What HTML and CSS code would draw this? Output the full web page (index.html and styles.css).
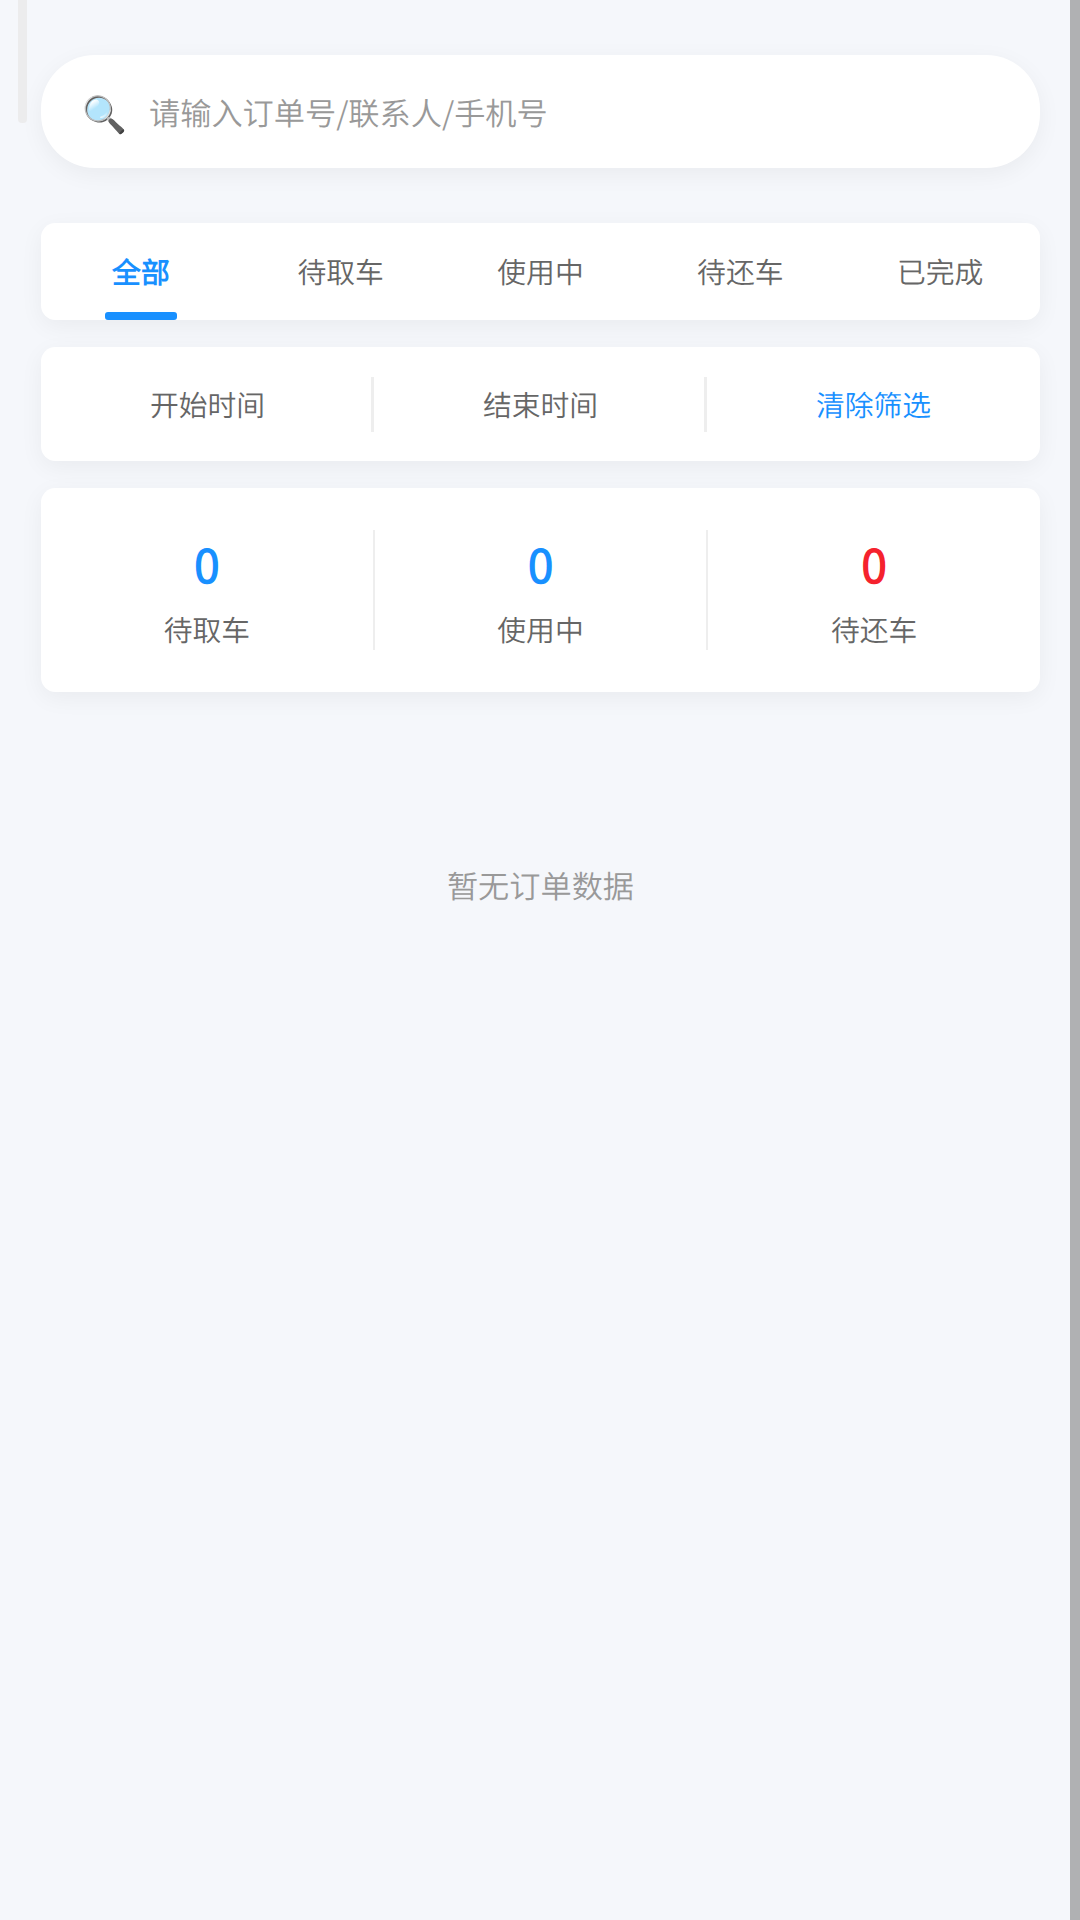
FILE: index.html
```
<!DOCTYPE html>
<html lang="zh-CN">
<head>
    <meta charset="UTF-8">
    <meta name="viewport" content="width=device-width, initial-scale=1.0">
    <title>订单列表</title>
    <link rel="stylesheet" href="styles.css">
</head>
<body>
    <div class="side-handle"></div>
    <div class="scroll-track"></div>

    <div class="container">
        <div class="search-box">
            <span class="search-icon">🔍</span>
            <span class="search-placeholder">请输入订单号/联系人/手机号</span>
        </div>

        <div class="card tabs">
            <div class="tab active">全部</div>
            <div class="tab">待取车</div>
            <div class="tab">使用中</div>
            <div class="tab">待还车</div>
            <div class="tab">已完成</div>
        </div>

        <div class="card filter">
            <div class="filter-item">开始时间</div>
            <div class="filter-item">结束时间</div>
            <div class="filter-item clear">清除筛选</div>
        </div>

        <div class="card stats">
            <div class="stat-item">
                <div class="stat-num">0</div>
                <div class="stat-label">待取车</div>
            </div>
            <div class="stat-item">
                <div class="stat-num">0</div>
                <div class="stat-label">使用中</div>
            </div>
            <div class="stat-item">
                <div class="stat-num red">0</div>
                <div class="stat-label">待还车</div>
            </div>
        </div>

        <div class="empty">暂无订单数据</div>
    </div>
</body>
</html>
```
FILE: styles.css
```
* {
    margin: 0;
    padding: 0;
    box-sizing: border-box;
}

body {
    font-family: "Noto Sans CJK SC DemiLight", "Noto Sans CJK SC", sans-serif;
    background: #f5f7fb;
    min-height: 100vh;
    color: #666;
    overflow-x: hidden;
    text-rendering: geometricPrecision;
}

.container {
    width: 1081px;
    padding: 55px 41px 0;
}

.side-handle {
    position: absolute;
    left: 18px;
    top: 0;
    width: 9px;
    height: 122.5px;
    border-radius: 0 0 4px 4px;
    background: #ececed;
}

.scroll-track {
    position: fixed;
    right: 0;
    top: 0;
    width: 10px;
    height: 100vh;
    background: #b0b1b3;
}

.search-box {
    display: flex;
    align-items: center;
    height: 113px;
    padding: 0 41px;
    margin-bottom: 55px;
    border-radius: 54px;
    background: #fff;
    box-shadow: 0 6px 23px rgba(0, 0, 0, 0.05);
}

.search-icon {
    width: 67px;
    font-size: 36px;
    line-height: 1;
}

.search-placeholder {
    font-size: 31.2px;
    color: #999;
}

.card {
    display: flex;
    border-radius: 14.4px;
    background: #fff;
    box-shadow: 0 6px 23px rgba(0, 0, 0, 0.05);
}

.tabs {
    height: 97px;
    margin-bottom: 27px;
}

.tab {
    position: relative;
    flex: 1;
    line-height: 97px;
    text-align: center;
    font-size: 28.8px;
}

.tab.active {
    color: #1890ff;
    font-weight: bold;
}

.tab.active::after {
    content: "";
    position: absolute;
    left: 50%;
    bottom: 0;
    width: 72px;
    height: 8px;
    margin-left: -36px;
    border-radius: 3px;
    background: #1890ff;
}

.filter {
    align-items: center;
    height: 114px;
    margin-bottom: 27px;
}

.filter-item {
    height: 55px;
    flex: 1;
    line-height: 55px;
    text-align: center;
    font-size: 28.8px;
}

/* divider between the filter columns */
.filter-item + .filter-item {
    border-left: 3px solid #eee;
    margin-left: -3px;
}

.filter-item.clear {
    color: #1890ff;
}

.stats {
    height: 204px;
    padding: 42px 0;
}

.stat-item {
    flex: 1;
    text-align: center;
    border-right: 2px solid #eee;
}

.stat-item:last-child {
    border-right: none;
}

.stat-num {
    font-size: 46px;
    font-weight: bold;
    line-height: 68px;
    color: #1890ff;
}

.stat-num.red {
    color: #f5222d;
}

.stat-label {
    padding-top: 3px;
    font-size: 28.8px;
    line-height: 58px;
}

.empty {
    padding-top: 170px;
    text-align: center;
    font-size: 31.2px;
    line-height: 46px;
    color: #999;
}
```
